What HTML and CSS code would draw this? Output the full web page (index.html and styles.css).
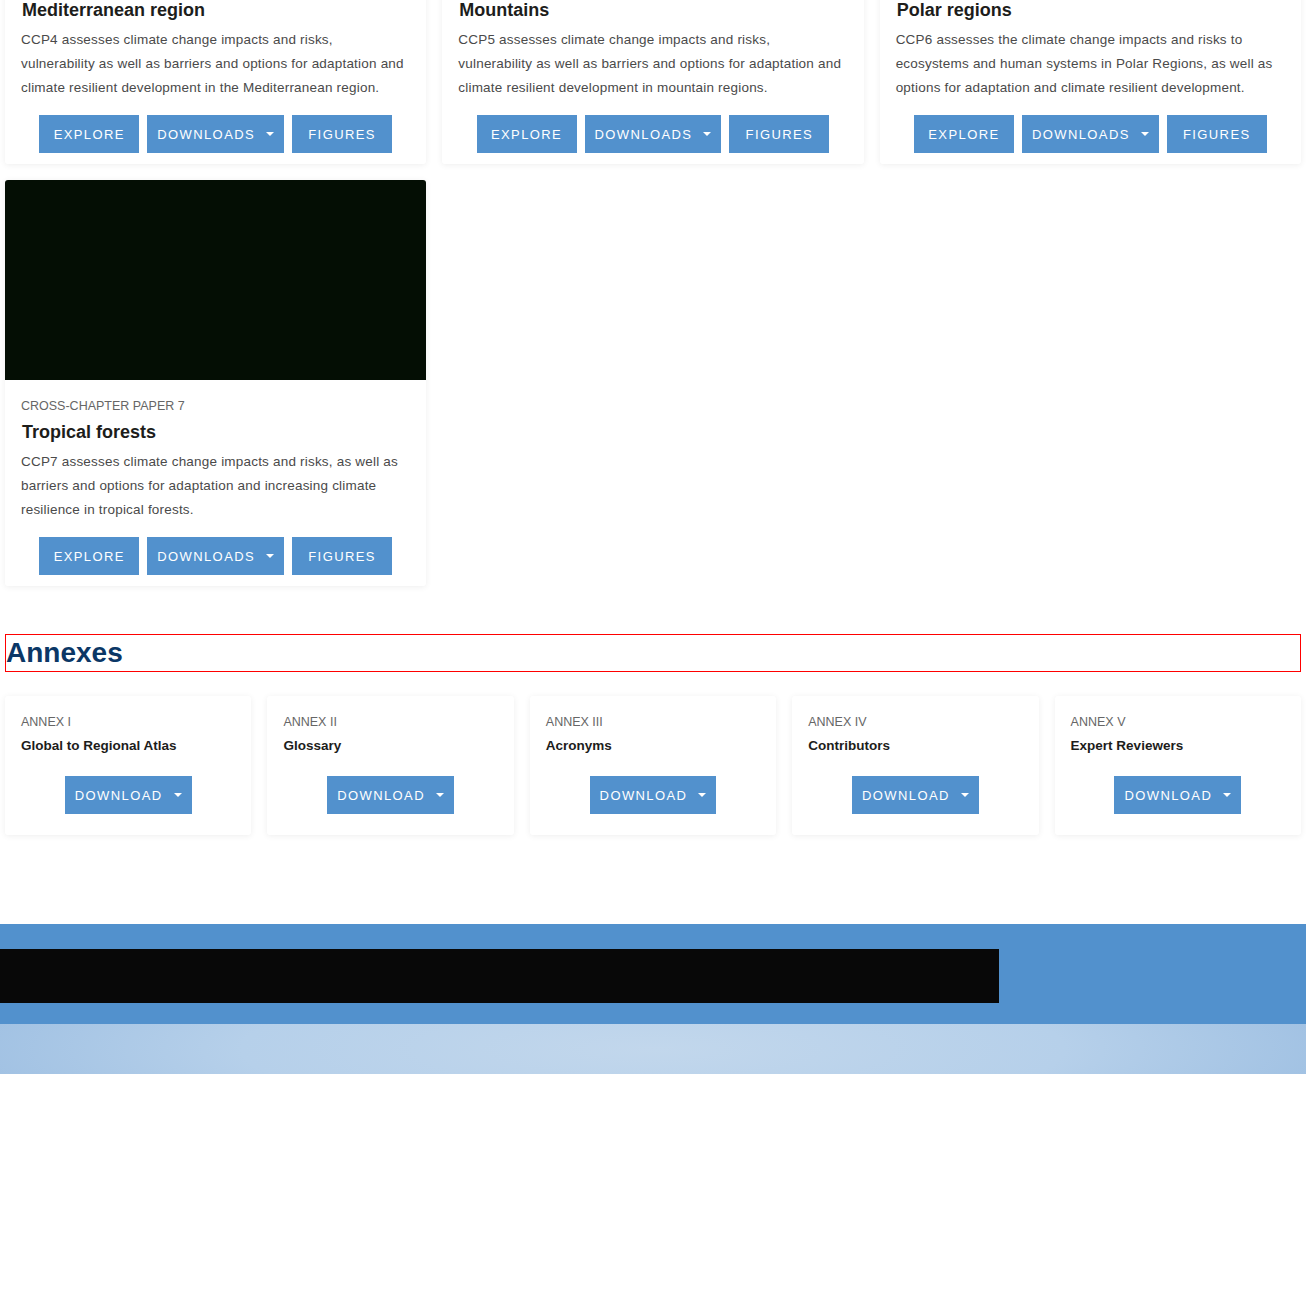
FILE: index.html
```html
<!DOCTYPE html>
<html lang="en">
<head>
<meta charset="utf-8">
<title>Cross-Chapter Papers and Annexes</title>
<link rel="stylesheet" href="styles.css">
</head>
<body>
<main class="page">
  <section class="ccp-grid">
    <article class="card">
      <div class="card-img"></div>
      <div class="card-body">
        <div class="label">Cross-Chapter Paper 4</div>
        <h3 class="title">Mediterranean region</h3>
        <p class="desc">CCP4 assesses climate change impacts and risks, vulnerability as well as barriers and options for adaptation and climate resilient development in the Mediterranean region.</p>
        <div class="btns">
          <a class="btn btn-w">Explore</a>
          <a class="btn btn-dd">Downloads<span class="caret"></span></a>
          <a class="btn btn-w">Figures</a>
        </div>
      </div>
    </article>
    <article class="card">
      <div class="card-img"></div>
      <div class="card-body">
        <div class="label">Cross-Chapter Paper 5</div>
        <h3 class="title">Mountains</h3>
        <p class="desc">CCP5 assesses climate change impacts and risks, vulnerability as well as barriers and options for adaptation and climate resilient development in mountain regions.</p>
        <div class="btns">
          <a class="btn btn-w">Explore</a>
          <a class="btn btn-dd">Downloads<span class="caret"></span></a>
          <a class="btn btn-w">Figures</a>
        </div>
      </div>
    </article>
    <article class="card">
      <div class="card-img"></div>
      <div class="card-body">
        <div class="label">Cross-Chapter Paper 6</div>
        <h3 class="title">Polar regions</h3>
        <p class="desc">CCP6 assesses the climate change impacts and risks to ecosystems and human systems in Polar Regions, as well as options for adaptation and climate resilient development.</p>
        <div class="btns">
          <a class="btn btn-w">Explore</a>
          <a class="btn btn-dd">Downloads<span class="caret"></span></a>
          <a class="btn btn-w">Figures</a>
        </div>
      </div>
    </article>
    <article class="card">
      <div class="card-img"></div>
      <div class="card-body">
        <div class="label">Cross-Chapter Paper 7</div>
        <h3 class="title">Tropical forests</h3>
        <p class="desc">CCP7 assesses climate change impacts and risks, as well as barriers and options for adaptation and increasing climate resilience in tropical forests.</p>
        <div class="btns">
          <a class="btn btn-w">Explore</a>
          <a class="btn btn-dd">Downloads<span class="caret"></span></a>
          <a class="btn btn-w">Figures</a>
        </div>
      </div>
    </article>
  </section>

  <h2 class="section-title">Annexes</h2>

  <section class="annex-grid">
    <article class="annex">
      <div class="label">Annex I</div>
      <h4 class="annex-title">Global to Regional Atlas</h4>
      <div class="btns"><a class="btn btn-dd">Download<span class="caret"></span></a></div>
    </article>
    <article class="annex">
      <div class="label">Annex II</div>
      <h4 class="annex-title">Glossary</h4>
      <div class="btns"><a class="btn btn-dd">Download<span class="caret"></span></a></div>
    </article>
    <article class="annex">
      <div class="label">Annex III</div>
      <h4 class="annex-title">Acronyms</h4>
      <div class="btns"><a class="btn btn-dd">Download<span class="caret"></span></a></div>
    </article>
    <article class="annex">
      <div class="label">Annex IV</div>
      <h4 class="annex-title">Contributors</h4>
      <div class="btns"><a class="btn btn-dd">Download<span class="caret"></span></a></div>
    </article>
    <article class="annex">
      <div class="label">Annex V</div>
      <h4 class="annex-title">Expert Reviewers</h4>
      <div class="btns"><a class="btn btn-dd">Download<span class="caret"></span></a></div>
    </article>
  </section>
</main>

<footer class="footer">
  <div class="footer-main">
    <div class="footer-bar"></div>
  </div>
  <div class="footer-glow"></div>
</footer>
</body>
</html>
```

FILE: styles.css
```css
* { box-sizing: border-box; }

html, body {
  margin: 0;
  padding: 0;
  background: #ffffff;
}

body {
  font-family: "Liberation Sans", Arial, sans-serif;
  color: #1d1d1b;
}

.page {
  padding: 0 5px;
  margin-top: -242px;
}

.ccp-grid {
  display: grid;
  grid-template-columns: repeat(3, 1fr);
  gap: 16px;
}

.card {
  background: #fff;
  border-radius: 3px;
  box-shadow: 0 1px 6px rgba(0, 0, 0, 0.07);
  overflow: hidden;
}

.card-img {
  height: 200px;
  background: #040e04;
}

.card-body {
  padding: 17px 16px 11px;
}

.label {
  font-size: 12.5px;
  line-height: 18px;
  text-transform: uppercase;
  color: #666666;
}

.title {
  margin: 3px 0 0;
  padding-left: 1px;
  font-size: 18px;
  line-height: 28px;
  font-weight: 700;
  color: #1d1d1b;
}

.desc {
  margin: 4px 0 0;
  font-size: 13.5px;
  line-height: 24px;
  letter-spacing: 0.2px;
  color: #4a4a4a;
}

.btns {
  display: flex;
  justify-content: center;
  gap: 8px;
  margin-top: 15px;
}

.btn {
  display: inline-flex;
  align-items: center;
  justify-content: center;
  height: 38px;
  padding: 0 16px;
  background: #5291cd;
  color: #fff;
  font-size: 13px;
  letter-spacing: 1.4px;
  text-transform: uppercase;
  text-decoration: none;
}

.btn-w { width: 100px; }

.btn-dd { padding: 0 10px; }

.caret {
  display: inline-block;
  width: 0;
  height: 0;
  margin-left: 11px;
  border-left: 4px solid transparent;
  border-right: 4px solid transparent;
  border-top: 4px solid #fff;
}

.section-title {
  margin: 48px 0 0;
  border: 1px solid #ff0000;
  font-size: 28px;
  line-height: 36px;
  font-weight: 700;
  color: #0b3766;
}

.annex-grid {
  display: grid;
  grid-template-columns: repeat(5, 1fr);
  gap: 16px;
  margin-top: 24px;
}

.annex {
  background: #fff;
  border-radius: 3px;
  box-shadow: 0 1px 6px rgba(0, 0, 0, 0.07);
  padding: 17px 16px 21px;
}

.annex-title {
  margin: 5px 0 0;
  font-size: 13.5px;
  line-height: 20px;
  font-weight: 700;
  color: #1d1d1b;
}

.annex .btns { margin-top: 20px; }

.footer {
  margin-top: 89px;
}

.footer-main {
  background: #5291cd;
  padding: 25px 0 21px;
}

.footer-bar {
  width: 999px;
  height: 54px;
  background: #080808;
}

.footer-glow {
  height: 50px;
  background: radial-gradient(ellipse 70% 300% at 50% 50%, #c2d7ec 0%, #b6d0ea 45%, #8fb5dd 100%);
}
```
